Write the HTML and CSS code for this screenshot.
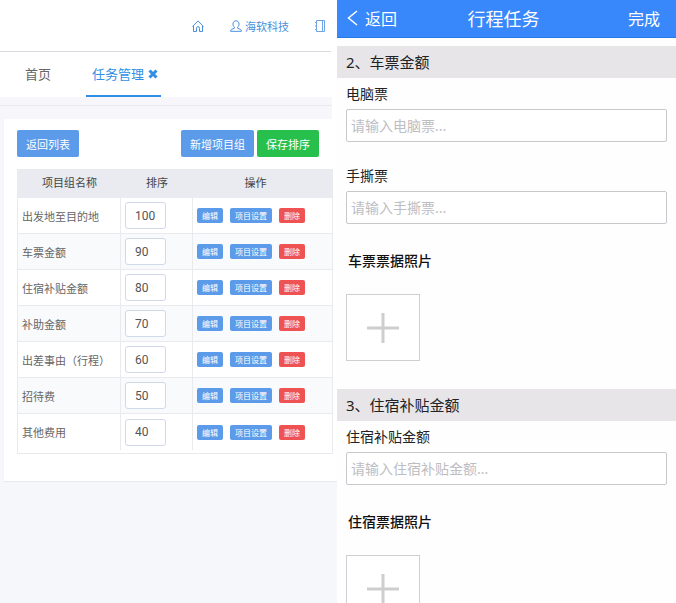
FILE: index.html
```html
<!DOCTYPE html>
<html lang="zh-CN">

<head>
    <meta charset="UTF-8">
    <meta name="viewport" content="width=device-width, initial-scale=1.0">
    <title>行程任务</title>
    <link rel="stylesheet" href="styles.css">
</head>

<body>
    <div class="page">
        <div class="admin">
            <header class="topbar">
                <a href="#" title="首页">
                    <svg class="icon" width="12" height="12" viewBox="0 0 12 12">
                        <path d="M.5 6.500 6 .9l5.500 5.600M1.500 5.500v6h3V8.200a1.500 1.500 0 0 1 3 0v3.300h3v-6" />
                    </svg>
                </a>
                <a href="#" class="user">
                    <svg class="icon" width="12" height="12" viewBox="0 0 12 12">
                        <path d="M4.500 7.300C3.400 6.500 3 5.300 3 4c0-2 1.200-3.200 3-3.200S9 2 9 4c0 1.300-.4 2.500-1.500 3.300v.9l3 1.200c.6.3.9.9.9 1.900H.6c0-1 .3-1.600.9-1.900l3-1.200z" />
                    </svg>
                    海软科技
                </a>
                <a href="#" title="更多">
                    <svg class="icon book" width="10" height="12" viewBox="0 0 10 12">
                        <path d="M1.500.5h8v11h-8zM7.500 .5v11M0 2.500h2M0 6h2M0 9.500h2" />
                    </svg>
                </a>
            </header>
            <nav class="tabs">
                <a href="#" class="tab">首页</a>
                <a href="#" class="tab active">
                    任务管理
                    <svg width="10" height="10" viewBox="0 0 10 10">
                        <path d="M1.500 1.500l7 7M8.500 1.500l-7 7" />
                    </svg>
                </a>
            </nav>
            <div class="strip"></div>
            <main class="content">
                <div class="card">
                    <div class="toolbar">
                        <button class="btn">返回列表</button>
                        <div class="right">
                            <button class="btn">新增项目组</button>
                            <button class="btn green">保存排序</button>
                        </div>
                    </div>
                    <div class="table-wrap">
                        <table>
                            <thead>
                                <tr>
                                    <th class="name">项目组名称</th>
                                    <th class="sort">排序</th>
                                    <th class="ops">操作</th>
                                </tr>
                            </thead>
                            <tbody>
                                <tr>
                                    <td>出发地至目的地</td>
                                    <td><input type="text" value="100" aria-label="出发地至目的地 排序"></td>
                                    <td>
                                        <div class="actions">
                                            <button class="mini">编辑</button>
                                            <button class="mini">项目设置</button>
                                            <button class="mini red">删除</button>
                                        </div>
                                    </td>
                                </tr>
                                <tr>
                                    <td>车票金额</td>
                                    <td><input type="text" value="90" aria-label="车票金额 排序"></td>
                                    <td>
                                        <div class="actions">
                                            <button class="mini">编辑</button>
                                            <button class="mini">项目设置</button>
                                            <button class="mini red">删除</button>
                                        </div>
                                    </td>
                                </tr>
                                <tr>
                                    <td>住宿补贴金额</td>
                                    <td><input type="text" value="80" aria-label="住宿补贴金额 排序"></td>
                                    <td>
                                        <div class="actions">
                                            <button class="mini">编辑</button>
                                            <button class="mini">项目设置</button>
                                            <button class="mini red">删除</button>
                                        </div>
                                    </td>
                                </tr>
                                <tr>
                                    <td>补助金额</td>
                                    <td><input type="text" value="70" aria-label="补助金额 排序"></td>
                                    <td>
                                        <div class="actions">
                                            <button class="mini">编辑</button>
                                            <button class="mini">项目设置</button>
                                            <button class="mini red">删除</button>
                                        </div>
                                    </td>
                                </tr>
                                <tr>
                                    <td>出差事由（行程）</td>
                                    <td><input type="text" value="60" aria-label="出差事由（行程） 排序"></td>
                                    <td>
                                        <div class="actions">
                                            <button class="mini">编辑</button>
                                            <button class="mini">项目设置</button>
                                            <button class="mini red">删除</button>
                                        </div>
                                    </td>
                                </tr>
                                <tr>
                                    <td>招待费</td>
                                    <td><input type="text" value="50" aria-label="招待费 排序"></td>
                                    <td>
                                        <div class="actions">
                                            <button class="mini">编辑</button>
                                            <button class="mini">项目设置</button>
                                            <button class="mini red">删除</button>
                                        </div>
                                    </td>
                                </tr>
                                <tr>
                                    <td>其他费用</td>
                                    <td><input type="text" value="40" aria-label="其他费用 排序"></td>
                                    <td>
                                        <div class="actions">
                                            <button class="mini">编辑</button>
                                            <button class="mini">项目设置</button>
                                            <button class="mini red">删除</button>
                                        </div>
                                    </td>
                                </tr>
                            </tbody>
                        </table>
                    </div>
                </div>
            </main>
        </div>

        <div class="mobile">
            <header class="navbar">
                <a href="#" class="back">
                    <svg width="11" height="16" viewBox="0 0 11 16">
                        <path d="M10 1 1.500 8l8.500 7" />
                    </svg>
                    返回
                </a>
                <h1>行程任务</h1>
                <a href="#" class="done">完成</a>
            </header>
            <section>
                <h2>2、车票金额</h2>
                <div class="field">
                    <label for="pcTicket">电脑票</label>
                    <input type="text" id="pcTicket" placeholder="请输入电脑票...">
                </div>
                <div class="field">
                    <label for="handTicket">手撕票</label>
                    <input type="text" id="handTicket" placeholder="请输入手撕票...">
                </div>
                <h3>车票票据照片</h3>
                <button class="upload" title="添加照片">
                    <svg width="32" height="30" viewBox="0 0 32 30">
                        <path d="M0 15h32M16 0v30" />
                    </svg>
                </button>
            </section>
            <section>
                <h2>3、住宿补贴金额</h2>
                <div class="field">
                    <label for="hotel">住宿补贴金额</label>
                    <input type="text" id="hotel" placeholder="请输入住宿补贴金额...">
                </div>
                <h3>住宿票据照片</h3>
                <button class="upload" title="添加照片">
                    <svg width="32" height="30" viewBox="0 0 32 30">
                        <path d="M0 15h32M16 0v30" />
                    </svg>
                </button>
            </section>
        </div>
    </div>
</body>

</html>
```

FILE: styles.css
```css
* {
    box-sizing: border-box;
}

body {
    margin: 0;
    font-family: "Noto Sans", "Noto Sans CJK SC", sans-serif;
    font-size: 11px;
    color: #666;
}

a {
    color: inherit;
    text-decoration: none;
}

button,
input {
    font-family: inherit;
    margin: 0;
}

button {
    border: none;
    cursor: pointer;
}

svg {
    display: block;
    fill: none;
    stroke: currentColor;
}

.page {
    display: grid;
    grid-template-columns: 337fr 339fr;
    height: 100vh;
    overflow: hidden;
}

/* admin */

.admin {
    display: flex;
    flex-direction: column;
    min-width: 0;
    background-color: #fff;
}

.topbar {
    display: flex;
    justify-content: flex-end;
    align-items: center;
    gap: 26px;
    height: 52px;
    margin-right: 6px;
    padding-right: 6px;
    border-bottom: 1px solid #d9dbe0;
    color: #4a8fdc;
}

.topbar .user {
    display: flex;
    align-items: center;
    gap: 3px;
}

.topbar .book {
    color: #6fa5e6;
}

.tabs {
    display: flex;
    gap: 29px;
    height: 45px;
    padding-left: 19px;
    font-size: 13px;
}

.tab {
    display: flex;
    align-items: center;
    gap: 4px;
    padding: 0 6px;
    border-bottom: 2px solid transparent;
}

.tab.active {
    padding-right: 3px;
    color: #2f8fe6;
    border-bottom-color: #2f8fe6;
}

.tab svg {
    stroke-width: 3;
}

.strip {
    height: 22px;
    margin-right: 5px;
    background: linear-gradient(#e9eaee, #e9eaee) 0 8px / 100% 1px no-repeat #f6f6fb;
}

.content {
    flex: 1;
    padding-left: 4px;
    background-color: #f6f7fa;
}

.card {
    padding: 11px 4px 27px 13px;
    background-color: #fff;
    box-shadow: 0 1px 1px #e9eaee;
}

.toolbar {
    display: flex;
    justify-content: space-between;
    padding-right: 14px;
    margin-bottom: 12px;
}

.toolbar .right {
    display: flex;
    gap: 3px;
}

.btn {
    height: 27px;
    padding: 0 9px;
    border-radius: 2px;
    background-color: #5b9be9;
    color: #fff;
    font-size: 11px;
}

.btn.green {
    background-color: #28c04c;
}

.table-wrap {
    padding-bottom: 3px;
    border: 1px solid #e8eaee;
}

table {
    width: 100%;
    border-collapse: separate;
    border-spacing: 0;
    table-layout: fixed;
}

th {
    height: 28px;
    padding: 0 0 4px;
    background-color: #e9ebf0;
    color: #444;
    font-weight: normal;
}

th.name {
    width: 103px;
}

th.sort {
    width: 72px;
}

th.ops {
    padding-right: 14px;
}

td {
    height: 36px;
    padding: 0 4px;
    border-right: 1px solid #e8eaee;
    border-bottom: 1px solid #e8eaee;
}

td:last-child {
    border-right: none;
}

tbody tr:last-child td {
    border-bottom: none;
}

tbody tr:nth-child(even) {
    background-color: #f9fafc;
}

td input {
    display: block;
    width: 41px;
    height: 27px;
    padding: 0 9px;
    border: 1px solid #cfd9e8;
    border-radius: 3px;
    background-color: #fff;
    color: #555;
    font-family: Roboto, "Noto Sans", sans-serif;
    font-size: 12px;
}

.actions {
    display: flex;
    gap: 7px;
}

.mini {
    height: 15px;
    padding: 0 5px;
    border-radius: 2px;
    background-color: #5b9be9;
    color: #fff;
    font-size: 8px;
    line-height: 15px;
    white-space: nowrap;
}

.mini.red {
    background-color: #ee5253;
}

/* mobile */

.mobile {
    min-width: 0;
    overflow: hidden;
    background-color: #fefefe;
    color: #222;
    font-size: 14px;
}

.navbar {
    display: grid;
    grid-template-columns: 1fr auto 1fr;
    align-items: center;
    height: 38px;
    margin-bottom: 8px;
    padding: 0 16px 1px 10px;
    border-bottom: 1px solid #2878e8;
    background-color: #3888fb;
    color: #fff;
    font-size: 16px;
}

.navbar h1 {
    margin: 0;
    font-size: 18px;
    font-weight: normal;
}

.back {
    display: flex;
    align-items: center;
    gap: 7px;
}

.back svg {
    stroke-width: 1.5;
}

.done {
    text-align: right;
}

h2 {
    margin: 0;
    padding: 0 9px;
    background-color: #e7e5e8;
    font-size: 15px;
    font-weight: normal;
    line-height: 32px;
}

.field {
    padding: 8px 9px 18px;
}

.field label {
    display: block;
    margin-bottom: 7px;
    line-height: 16px;
}

.field input {
    display: block;
    width: 100%;
    height: 33px;
    padding: 0 4px;
    border: 1px solid #c8c8cc;
    border-radius: 2px;
    background-color: #fff;
    font-size: 14px;
}

.field input::placeholder {
    color: #bdbdc2;
}

h3 {
    margin: 9px 11px 23px;
    color: #111;
    font-size: 14px;
    font-weight: 500;
    line-height: 20px;
}

.upload {
    display: flex;
    align-items: center;
    justify-content: center;
    width: 74px;
    height: 67px;
    margin: 0 9px 28px;
    padding: 0;
    border: 1px solid #cfcfd2;
    background-color: #fff;
    color: #cfcdd0;
}

.upload svg {
    stroke-width: 3;
}
```
